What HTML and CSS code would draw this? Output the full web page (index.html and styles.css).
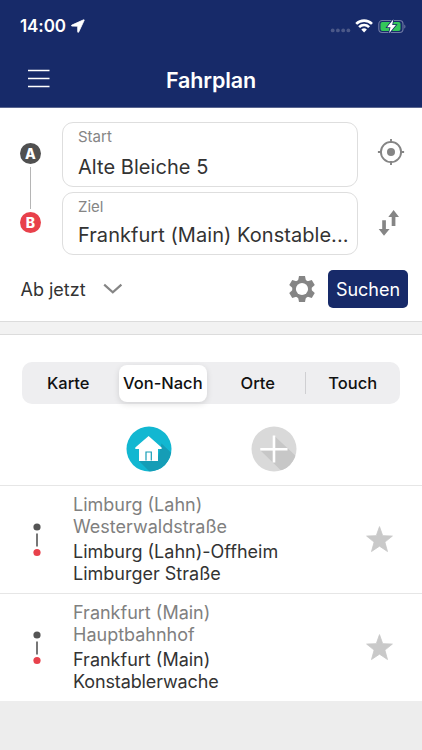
FILE: index.html
```html
<!DOCTYPE html>
<html lang="de">
<head>
<meta charset="utf-8">
<meta name="viewport" content="width=device-width, initial-scale=1">
<title>Fahrplan</title>
<link rel="stylesheet" href="styles.css">
</head>
<body>
<svg class="defs" width="0" height="0" aria-hidden="true">
  <symbol id="star" viewBox="0 0 26 26"><path d="M13 .6 16.1 9.3 25.4 9.7 18.2 15.5 20.7 24.6 13 19.4 5.3 24.6 7.8 15.5.6 9.7 9.9 9.3Z" fill="#c9c9c9" stroke="#c9c9c9" stroke-width=".8" stroke-linejoin="round"/></symbol>
  <symbol id="route" viewBox="0 0 8 34"><circle cx="4" cy="4" r="3.6" fill="#555"/><path d="M4 10.500v13" stroke="#777" stroke-width="2"/><circle cx="4" cy="29.500" r="3.600" fill="#e8414b"/></symbol>
</svg>
<header class="header">
  <div class="status">
    <div class="clock"><span>14:00</span>
      <svg width="14" height="14" viewBox="0 0 14 14"><path d="M12.600.8.8 6.100c-.6.3-.5 1 .2 1l5.700.1v5.600c0 .7.7.8 1 .2L13.200 1.300c.2-.4-.2-.7-.6-.5Z" fill="#fff" stroke="#fff" stroke-width=".8"/></svg>
    </div>
    <svg width="78" height="16" viewBox="0 0 78 16">
      <g fill="#4b5888"><circle cx="3.700" cy="12.400" r="1.900"/><circle cx="8.900" cy="12.400" r="1.900"/><circle cx="14.200" cy="12.400" r="1.900"/><circle cx="19.400" cy="12.400" r="1.900"/></g>
      <g fill="none" stroke="#fff" stroke-width="2.600"><path d="M27.200 5.900a11.200 11.200 0 0 1 15.800 0M30.100 9.100a7.100 7.100 0 0 1 10 0"/></g>
      <path d="M32.300 11.600a4 4 0 0 1 5.600 0L35.100 14.500Z" fill="#fff"/>
      <rect x="49.800" y="2.500" width="24.200" height="12" rx="3.500" fill="none" stroke="#717ba6" stroke-width="1.100"/>
      <path d="M75.300 6.400c1.500.6 1.500 3.600 0 4.200Z" fill="#717ba6"/>
      <rect x="51.500" y="4.100" width="20" height="8.800" rx="2" fill="#34c759"/>
      <path d="m64.400 1.300-6.300 8h3.400l-1.400 6 6.800-8.300h-3.700Z" fill="#fff" stroke="#172a69" stroke-width="1.600" paint-order="stroke"/>
    </svg>
  </div>
  <div class="navbar">
    <svg class="menu" width="22" height="19" viewBox="0 0 22 19"><path d="M0 1.500h21.500M0 9.500h21.500M0 17.500h21.500" stroke="#fff" stroke-width="1.400"/></svg>
    <h1>Fahrplan</h1>
  </div>
</header>
<main>
  <section class="search">
    <div class="places">
      <div class="rail"><b class="pin">A</b><i></i><b class="pin dest">B</b></div>
      <div class="fields">
        <div class="field"><label>Start</label><p>Alte Bleiche 5</p></div>
        <div class="field to"><label>Ziel</label><p>Frankfurt (Main) Konstable...</p></div>
      </div>
      <div class="tools">
        <svg width="28" height="28" viewBox="0 0 28 28"><g fill="none" stroke="#858585" stroke-width="1.900"><circle cx="14" cy="14" r="10.100"/><path d="M14 .9v4M14 23.100v4M.9 14h4M23.100 14h4"/></g><circle cx="14" cy="14" r="4" fill="#858585"/></svg>
        <svg class="swap" width="23" height="28" viewBox="-1 0 23 28"><path d="M14.600 1 20 8h-3.600v9h-3.700V8H9.300ZM3.200 11.200h3.700V20h3.700L5 26.800-.3 20h3.500Z" fill="#858585"/></svg>
      </div>
    </div>
    <div class="actions">
      <span class="when">Ab jetzt</span>
      <svg class="chevron" width="20" height="12" viewBox="0 0 20 12"><path d="m1.200 1.600 8.600 7.600 8.600-7.600" fill="none" stroke="#858585" stroke-width="2.200"/></svg>
      <svg class="gear" width="28" height="28" viewBox="-14 -14 28 28"><g fill="#858585"><path id="tooth" d="M-4-8-3-13H3L4-8V8L3 13H-3L-4 8Z"/><use href="#tooth" transform="rotate(60)"/><use href="#tooth" transform="rotate(120)"/><circle r="9.800"/></g><circle r="6.100" fill="#fff"/></svg>
      <button>Suchen</button>
    </div>
  </section>
  <section class="favorites">
    <nav class="tabs"><span class="first">Karte</span><span class="active">Von-Nach</span><span>Orte</span><span class="last">Touch</span></nav>
    <div class="shortcuts">
      <svg width="46" height="46" viewBox="0 0 46 46"><defs><clipPath id="disc"><circle cx="23" cy="23" r="22.500"/></clipPath></defs><circle cx="23" cy="23" r="22.500" fill="#12b7d1"/><path d="M13 35 24 46H46V27.500L35.500 17.500 31 35Z" fill="#159db6" clip-path="url(#disc)"/><path d="M22.600 10 35.600 21.500V23H32V35H13V23H9.300V21.500Z" fill="#fff"/><path d="M20 34.500V26h5.300v8.500" fill="#fff" stroke="#159db6" stroke-width="1.200"/></svg>
      <svg width="46" height="46" viewBox="0 0 46 46"><circle cx="23" cy="23" r="22.500" fill="#d9d9d9"/><path d="M23.500 10 46 31V46H31.500L9.500 24.500H22Z" fill="#c7c7c7" clip-path="url(#disc)"/><path d="M9.300 23.200H36.500M23 9.500V36.600" stroke="#fff" stroke-width="2.600"/></svg>
    </div>
    <article class="trip"><svg class="route" width="8" height="34"><use href="#route"/></svg><div class="stops"><p class="from">Limburg (Lahn)<br>Westerwaldstraße</p><p>Limburg (Lahn)-Offheim<br>Limburger Straße</p></div><svg class="star" width="27" height="27"><use href="#star"/></svg></article>
    <article class="trip"><svg class="route" width="8" height="34"><use href="#route"/></svg><div class="stops"><p class="from">Frankfurt (Main)<br>Hauptbahnhof</p><p>Frankfurt (Main)<br><span class="tight">Konstablerwache</span></p></div><svg class="star" width="27" height="27"><use href="#star"/></svg></article>
  </section>
</main>
</body>
</html>
```
FILE: styles.css
```css
* { box-sizing: border-box; }
body { margin: 0; min-height: 750px; background: #ededed; color: #333; font: 18px/22px Inter, Roboto, sans-serif; overflow: hidden; }
h1, p { margin: 0; font-weight: 400; }
svg { display: block; flex: none; }
.defs { position: absolute; }
.header { height: 108px; background: #172a69; color: #fff; padding-top: 15px; border-bottom: 1px solid #59658f; }
.status { display: flex; justify-content: space-between; align-items: center; height: 22px; padding: 0 15px 0 20px; }
.clock { display: flex; align-items: center; gap: 5px; font-size: 17px; font-weight: 600; letter-spacing: -0.1px; }
.navbar { display: grid; grid-template-columns: 60px 1fr 60px; align-items: center; height: 42px; margin-top: 21px; }
.menu { margin-left: 28px; margin-top: -1px; }
h1 { text-align: center; font-size: 21.5px; font-weight: 600; line-height: 28px; margin-top: 2px; letter-spacing: -0.1px; }
.search { height: 226px; background: #fff; padding-top: 14px; border-bottom: 12px solid #f2f2f2; box-shadow: inset 0 -1px #dcdcdc; }
.places { display: flex; height: 133px; }
.rail { width: 62px; display: flex; flex-direction: column; align-items: center; padding: 21px 1px 0 0; }
.rail i { width: 1.5px; height: 42px; margin: 3px 0; background: #b5b5b5; }
.pin { width: 21px; height: 21px; border-radius: 50%; background: #505050; color: #fff; text-align: center; font-size: 14px; line-height: 21px; font-weight: 800; }
.dest { background: #e8414b; }
.fields { width: 296px; display: flex; flex-direction: column; gap: 5px; }
.field { height: 65px; border: 1.5px solid #dedede; border-radius: 11px; padding: 4px 0 0 15px; white-space: nowrap; }
.to { height: 63px; }
.field label { display: block; font-size: 15px; line-height: 20px; color: #858585; }
.field p { font-size: 20px; line-height: 26px; margin-top: 7px; letter-spacing: 0.05px; }
.to p { margin-top: 5px; }
.tools { flex: 1; display: flex; flex-direction: column; gap: 43px; padding: 16px 0 0 19px; }
.swap { margin-left: 1px; }
.actions { display: flex; align-items: center; height: 38px; margin-top: 15px; padding: 0 14px 0 20.5px; }
.when { width: 82px; margin-top: 2px; }
.gear { margin-left: auto; }
button { width: 80px; height: 38px; margin-left: 12px; padding: 2px 0 0; border: 0; border-radius: 5px; background: #172a69; color: #fff; font: 18px/36px Inter, Roboto, sans-serif; }
.favorites { background: #fff; height: 367px; border-top: 1px solid #dcdcdc; padding-top: 27px; }
.tabs { display: grid; grid-template-columns: repeat(4, 1fr); align-items: center; height: 42px; margin: 0 22px; padding: 0 2px; border-radius: 10px; background: #eeeef0; color: #111; font-size: 16.5px; font-weight: 500; text-align: center; }
.first { padding-right: 5px; }
.active { height: 37px; line-height: 37px; margin: 0 4px 0 1px; border-radius: 8px; background: #fff; box-shadow: 0 2px 6px #0000001f; }
.last { border-left: 1px solid #cfcfd2; padding-left: 2px; }
.shortcuts { display: flex; gap: 79px; padding: 22px 0 0 125.5px; height: 81px; }
.trip { height: 108px; border-top: 1px solid #e6e6e6; display: flex; align-items: center; padding: 0 29px 0 32.5px; }
.route { margin-top: 1px; }
.stops { flex: 1; margin-left: 32.5px; }
.stops p + p { margin-top: 3px; }
.from { color: #808080; }
.tight { letter-spacing: -0.12px; }
```
